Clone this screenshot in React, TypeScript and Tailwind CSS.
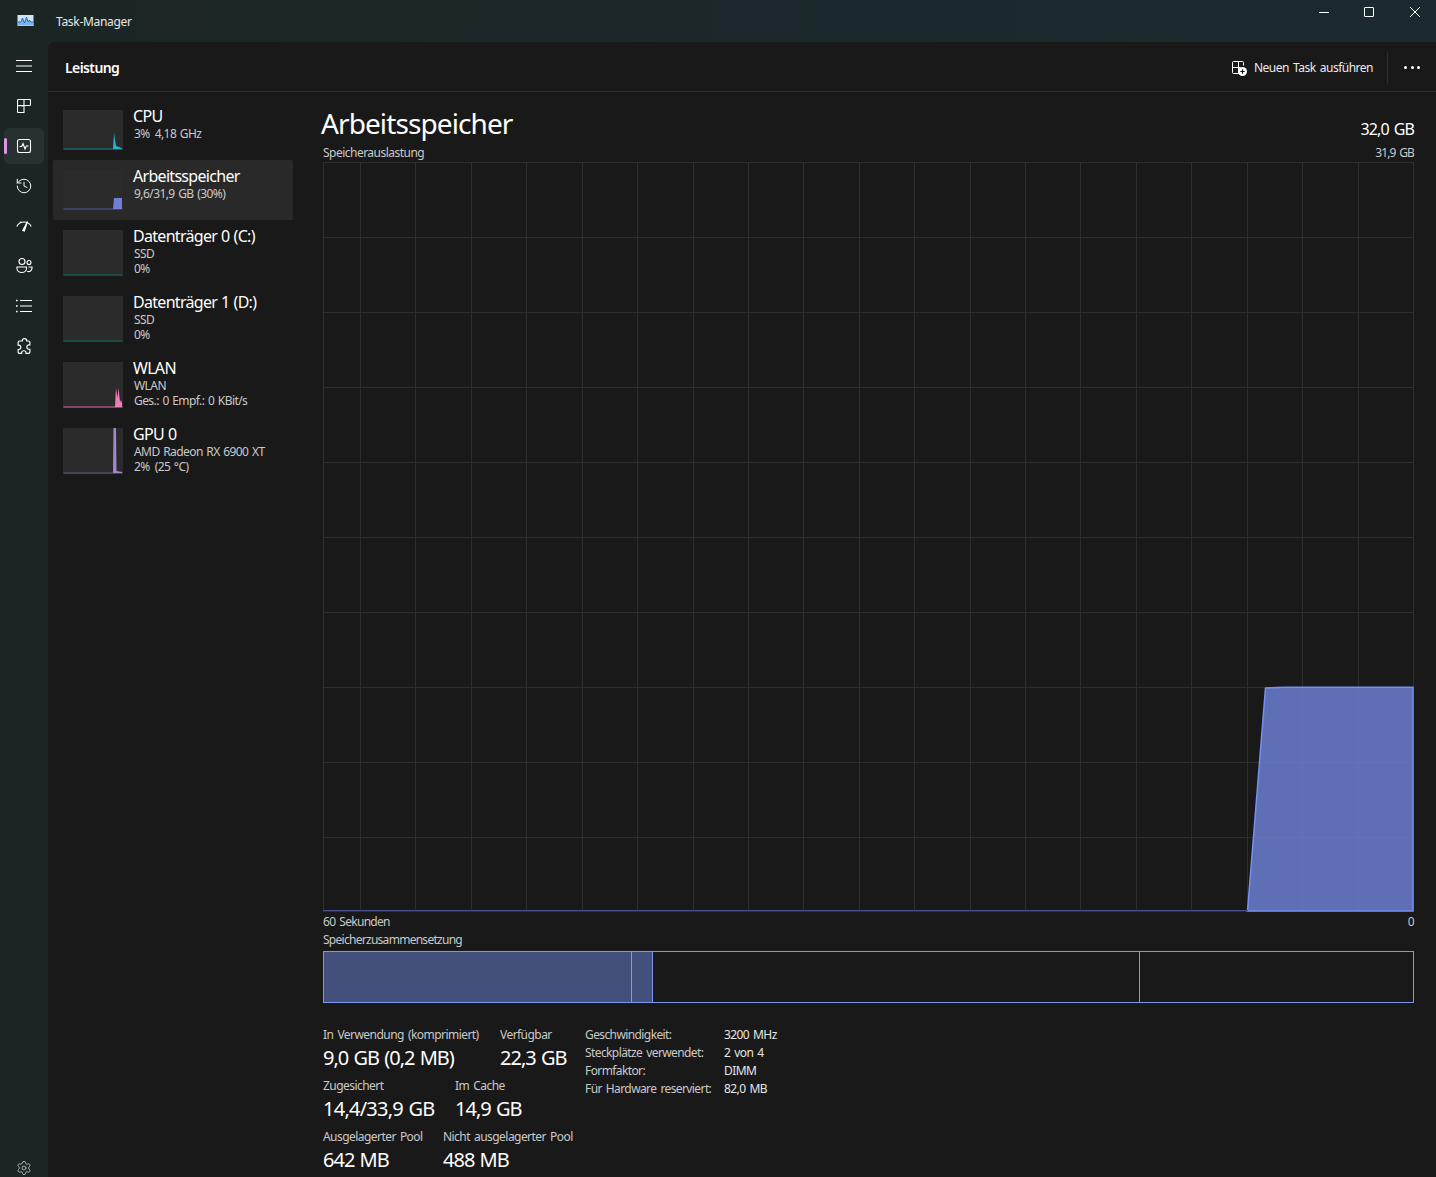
import { History, Settings } from "lucide-react";

const gridX = [360, 415, 471, 526, 582, 637, 693, 748, 803, 859, 914, 970, 1025, 1080, 1136, 1191, 1247, 1302, 1358];
const gridY = [237, 312, 387, 462, 537, 612, 687, 762, 837];

function AppIcon() {
  return (
    <svg width="18" height="14" viewBox="0 0 18 14">
      <rect x="0.5" y="1" width="16" height="11" fill="#cfe3f5" />
      <path d="M1 8h3l1.5-4 2 5 2-6 1.5 5 1.5-2 1 2h3v3.5H1z" fill="#7db4e8" />
      <path d="M1 8h3l1.5-4 2 5 2-6 1.5 5 1.5-2 1 2h3" fill="none" stroke="#1f6fc4" strokeWidth="1" />
    </svg>
  );
}

function MenuIcon() {
  return (
    <svg width="16" height="16" viewBox="0 0 16 16" stroke="currentColor" strokeWidth="1">
      <path d="M0 2.5h16M0 8h16M0 13.5h16" />
    </svg>
  );
}

function ProcessIcon() {
  return (
    <svg width="14" height="14" viewBox="1 1 14 14" fill="none" stroke="currentColor" strokeWidth="1.1" className="-mt-px">
      <path d="M1.500 7.500H8v7H2.500a1 1 0 0 1-1-1zM1.500 7.500v-5a1 1 0 0 1 1-1H8v6.500zM8 1.500h5.500a1 1 0 0 1 1 1v4a1 1 0 0 1-1 1H8z" />
    </svg>
  );
}

function PerfIcon() {
  return (
    <svg width="16" height="16" viewBox="0 0 16 16" fill="none" stroke="currentColor" strokeWidth="1.1">
      <rect x="1.5" y="1.5" width="13" height="13" rx="2" />
      <path d="M3.5 8.5h2.2l1.3-3 2 5.5 1.3-3h2.2" />
    </svg>
  );
}

function GaugeIcon() {
  return (
    <svg width="16" height="16" viewBox="0 0 16 16" fill="none" stroke="currentColor" strokeWidth="1.2" className="-mt-[3px]">
      <path d="M0.8 9.5A8 8 0 0 1 15.2 9.5" />
      <path d="M6.800 13.500L11.500 4.500L8.300 14z" fill="currentColor" />
      <path d="M4 4.600l1 1.400" />
    </svg>
  );
}

function UsersIcon() {
  return (
    <svg width="17" height="17" viewBox="0 0 17 17" fill="none" stroke="currentColor" strokeWidth="1.1" className="-mt-px">
      <circle cx="6" cy="4.5" r="3" />
      <circle cx="13" cy="5.5" r="2" />
      <path d="M1 10h9.500v1.500a4.750 4 0 0 1-9.500 0z" />
      <path d="M12.500 10H16v1a3.500 3.500 0 0 1-4.800 3.300" />
    </svg>
  );
}

function ListIcon() {
  return (
    <svg width="16" height="16" viewBox="0 0 16 16" fill="none" stroke="currentColor" strokeWidth="1.1" className="-mt-px">
      <path d="M4 2.500h12M4 8h12M4 13.500h12" />
      <path d="M0 2.500h1.600M0 8h1.600M0 13.500h1.600" strokeWidth="1.600" />
    </svg>
  );
}

function PuzzleIcon() {
  return (
    <svg width="15" height="17" viewBox="3 0.500 11.500 14" fill="none" stroke="currentColor" strokeWidth="0.95">
      <path d="M7 2.500c0-1 .8-1.500 1.700-1.500s1.800.6 1.800 1.500v.5H12a1.200 1.200 0 0 1 1.200 1.200v2h-.8c-1 0-1.700.7-1.700 1.800s.7 1.800 1.700 1.800h.8v2.200a1.200 1.200 0 0 1-1.200 1.200h-2v-.5c0-1-.8-1.700-1.800-1.700s-1.800.7-1.800 1.700v.5H4.700a1.200 1.200 0 0 1-1.200-1.200v-2H4c1 0 1.700-.8 1.700-1.800S5 6.400 4 6.400h-.5V4.200A1.200 1.200 0 0 1 4.700 3H7z" />
    </svg>
  );
}

function NewTaskIcon() {
  return (
    <svg width="16" height="16" viewBox="0 0 16 16" fill="none" stroke="#fff" strokeWidth="1">
      <path d="M1.500 7.500h6v6h-5a1 1 0 0 1-1-1zM1.500 7.500v-5a1 1 0 0 1 1-1h5v6zM7.500 1.500h4a1 1 0 0 1 1 1v3M7.500 7.500h2" />
      <circle cx="11.500" cy="11.500" r="4.500" fill="#fff" stroke="none" />
      <path d="M11.500 9.300v4.400M9.300 11.500h4.400" stroke="#191919" strokeWidth="1.200" />
    </svg>
  );
}

function NavButton({ children, active }: { children: React.ReactNode; active?: boolean }) {
  return (
    <div className={active ? "relative flex h-9 w-10 items-center justify-center rounded-[5px] bg-[#273130]" : "flex h-9 w-10 items-center justify-center"}>
      {active && <div className="absolute left-0 top-[10px] h-4 w-[3px] rounded-full bg-[#e095e4]" />}
      {children}
    </div>
  );
}

function Thumb({ h, line, fill, path }: { h: number; line: string; fill: string; path: string }) {
  return (
    <svg width="60" height={h} viewBox={`0 0 60 ${h}`} className="shrink-0">
      <rect width="60" height={h} fill="#2b2b2b" />
      <rect x="0.5" y={h - 1.5} width="59" height="1" fill={line} />
      <path d={path} fill={fill} />
    </svg>
  );
}

type Device = {
  name: string;
  lines: string[];
  thumbH: number;
  line: string;
  fill: string;
  path: string;
  selected?: boolean;
};

const devices: Device[] = [
  { name: "CPU", lines: ["3%\u2009 4,18 GHz"], thumbH: 40, line: "#147a8c", fill: "#26b4d0", path: "M50 39L51 23L53 36L56 37L59 38.5V39z" },
  { name: "Arbeitsspeicher", lines: ["9,6/31,9 GB (30%)"], thumbH: 40, line: "#4e5ca8", fill: "#6d7fd6", path: "M50 39L51 28H59V39z", selected: true },
  { name: "Datenträger 0 (C:)", lines: ["SSD", "0%"], thumbH: 46, line: "#0f6a62", fill: "none", path: "" },
  { name: "Datenträger 1 (D:)", lines: ["SSD", "0%"], thumbH: 46, line: "#0f6a62", fill: "none", path: "" },
  { name: "WLAN", lines: ["WLAN", "Ges.: 0 Empf.: 0 KBit/s"], thumbH: 46, line: "#d8689f", fill: "#f07fb8", path: "M52 45L53 26L54.5 36L55.5 26L57 40L58 38L59 41V45z" },
  { name: "GPU 0", lines: ["AMD Radeon RX 6900 XT", "2%\u2009 (25 °C)"], thumbH: 46, line: "#6e5a96", fill: "#a585d4", path: "M50 45L50.5 0H53L53.5 43L59 44V45z" },
];

function DeviceRow({ d }: { d: Device }) {
  return (
    <div className={d.selected ? "flex gap-[10px] rounded-[2px] bg-[#292929] p-[10px]" : "flex gap-[10px] p-[10px]"}>
      <Thumb h={d.thumbH} line={d.line} fill={d.fill} path={d.path} />
      <div className="flex min-w-0 flex-col">
        <div className="-mt-[2px] whitespace-nowrap text-[16px] leading-[16px] tracking-[-0.7px] [word-spacing:0.500px] text-white">{d.name}</div>
        <div className="mt-[2px] pl-px">
          {d.lines.map((l) => (
            <div key={l} className="whitespace-pre text-[12px] leading-[15px] tracking-[-0.57px] [word-spacing:1px] text-[#c9c9c9]">
              {l}
            </div>
          ))}
        </div>
      </div>
    </div>
  );
}

function Stat({ label, value, w, wide }: { label: string; value: string; w: string; wide?: boolean }) {
  return (
    <div className={w}>
      <div className="whitespace-nowrap text-[12px] leading-[16px] tracking-[-0.55px] [word-spacing:1.500px] text-[#c9c9c9]">{label}</div>
      <div className={wide ? "mt-px whitespace-nowrap text-[20px] leading-[27px] tracking-[-0.75px] [word-spacing:1px] text-white" : "mt-px whitespace-nowrap text-[20px] leading-[27px] tracking-[-1px] [word-spacing:1px] text-white"}>{value}</div>
    </div>
  );
}

const specs = [
  ["Geschwindigkeit:", "3200 MHz"],
  ["Steckplätze verwendet:", "2 von 4"],
  ["Formfaktor:", "DIMM"],
  ["Für Hardware reserviert:", "82,0 MB"],
];

export default function App() {
  return (
    <div className="flex h-[1177px] w-[1436px] flex-col overflow-hidden bg-gradient-to-r from-[#1b2524] to-[#1c2a30] font-['Noto_Sans',sans-serif] text-white">
      {/* title bar */}
      <div className="flex h-[42px] shrink-0 items-center">
        <div className="ml-[17px] mr-[21px] flex w-[18px] justify-center">
          <AppIcon />
        </div>
        <span className="mt-[2px] text-[12px] tracking-[-0.3px] text-[#e8e8e8]">Task-Manager</span>
        <div className="ml-auto flex items-center gap-[35px] pb-[18px] pr-[15px]">
          <div className="h-px w-[10px] bg-white" />
          <div className="h-[10px] w-[10px] rounded-[1px] border border-white" />
          <svg width="12" height="12" viewBox="0 0 12 12" stroke="#fff" strokeWidth="1">
            <path d="M1 1l10 10M11 1L1 11" />
          </svg>
        </div>
      </div>

      <div className="flex min-h-0 flex-1">
        {/* nav rail */}
        <div className="flex w-[48px] shrink-0 flex-col justify-between bg-[#1b2524] pl-1 pt-[6px] text-white">
          <div className="flex flex-col gap-1">
            <NavButton><MenuIcon /></NavButton>
            <NavButton><ProcessIcon /></NavButton>
            <NavButton active><PerfIcon /></NavButton>
            <NavButton><History size={18} strokeWidth={1.3} /></NavButton>
            <NavButton><GaugeIcon /></NavButton>
            <NavButton><UsersIcon /></NavButton>
            <NavButton><ListIcon /></NavButton>
            <NavButton><PuzzleIcon /></NavButton>
          </div>
          <div className="-mb-[9px]">
            <NavButton><Settings size={16} strokeWidth={1.1} className="text-[#d8d8d8]" /></NavButton>
          </div>
        </div>

        <div className="flex min-w-0 flex-1 flex-col rounded-tl-[7px] bg-[#191919]">
          {/* header */}
          <div className="flex h-[50px] shrink-0 items-center border-b border-[#2c2c2c] pl-[17px] pr-[16px] pt-[2px]">
            <span className="text-[14px] font-semibold tracking-[-0.6px]">Leistung</span>
            <div className="ml-auto flex items-center">
              <NewTaskIcon />
              <span className="ml-[7px] text-[12px] tracking-[-0.5px] [word-spacing:1.500px] text-[#ececec]">Neuen Task ausführen</span>
              <div className="ml-[14px] h-[32px] w-px bg-[#2e2e2e]" />
              <div className="ml-4 flex gap-[3.500px]">
                <div className="h-[3px] w-[3px] rounded-full bg-white" />
                <div className="h-[3px] w-[3px] rounded-full bg-white" />
                <div className="h-[3px] w-[3px] rounded-full bg-white" />
              </div>
            </div>
          </div>

          <div className="flex min-h-0 flex-1">
            {/* device list */}
            <div className="w-[245px] shrink-0 pl-[5px] pt-[8px]">
              {devices.map((d) => (
                <DeviceRow key={d.name} d={d} />
              ))}
            </div>

            {/* detail pane */}
            <div className="ml-[30px] w-[1091px] shrink-0">
              <div className="flex h-[49px] items-end justify-between pt-[14px]">
                <span className="-ml-[2px] mb-px text-[28px] leading-[34px] tracking-[-0.9px]">Arbeitsspeicher</span>
                <span className="pb-[1px] text-[16px] leading-[22px] tracking-[-0.85px] [word-spacing:1.500px]">32,0 GB</span>
              </div>
              <div className="mt-[4px] flex h-4 items-center justify-between text-[12px] tracking-[-0.52px] [word-spacing:1.500px] text-[#c9c9c9]">
                <span>Speicherauslastung</span>
                <span className="tracking-[-0.9px]">31,9 GB</span>
              </div>

              <svg width="1091" height="750" viewBox="323 162 1091 750" className="mt-px block">
                <rect x="323.500" y="162.500" width="1090" height="749" fill="#191919" stroke="#2e2e2e" />
                {gridX.map((x) => (
                  <line key={x} x1={x + 0.5} x2={x + 0.5} y1="162" y2="911" stroke="#2e2e2e" />
                ))}
                {gridY.map((y) => (
                  <line key={y} x1="323" x2="1414" y1={y + 0.5} y2={y + 0.5} stroke="#2e2e2e" />
                ))}
                <path d="M1247.500 911L1265.500 688L1285 687.200H1413V911z" fill="#6f84dc" fillOpacity="0.8" stroke="#7590f0" strokeWidth="1.500" />
                <line x1="323" x2="1248" y1="910.500" y2="910.500" stroke="#47528c" strokeWidth="1.200" />
              </svg>

              <div className="mt-px flex h-[18px] items-center justify-between text-[12px] tracking-[-0.7px] [word-spacing:1.500px] text-[#c9c9c9]">
                <span>60 Sekunden</span>
                <span>0</span>
              </div>
              <div className="flex h-[18px] items-center text-[12px] tracking-[-0.72px] text-[#c9c9c9]">
                Speicherzusammensetzung
              </div>
              <div className="mt-[2px] flex h-[52px] border border-[#7f95ee]">
                <div className="w-[308px] border-r border-[#7f95ee] bg-[#44507c]" />
                <div className="w-[21px] border-r border-[#7f95ee] bg-[#44507c]" />
                <div className="w-[487px] border-r border-[#7f95ee]" />
              </div>

              {/* stats */}
              <div className="mt-[24px] flex">
                <div className="w-[262px] shrink-0">
                  <div className="flex gap-5">
                    <Stat w="w-[157px]" label="In Verwendung (komprimiert)" value="9,0 GB (0,2 MB)" />
                    <Stat w="w-[80px]" label="Verfügbar" value="22,3 GB" />
                  </div>
                  <div className="mt-[7px] flex gap-5">
                    <Stat w="w-[112px]" label="Zugesichert" value="14,4/33,9 GB" wide />
                    <Stat w="w-[80px]" label="Im Cache" value="14,9 GB" />
                  </div>
                  <div className="mt-[7px] flex gap-5">
                    <Stat w="w-[100px]" label="Ausgelagerter Pool" value="642 MB" />
                    <Stat w="w-[130px]" label="Nicht ausgelagerter Pool" value="488 MB" />
                  </div>
                </div>
                <div className="-mt-px flex flex-col">
                  {specs.map(([k, v]) => (
                    <div key={k} className="flex h-[18px] items-center text-[12px] tracking-[-0.6px] [word-spacing:1.500px]">
                      <span className="w-[139px] whitespace-nowrap text-[#c9c9c9]">{k}</span>
                      <span className="text-[#e6e6e6]">{v}</span>
                    </div>
                  ))}
                </div>
              </div>
            </div>
          </div>
        </div>
      </div>
    </div>
  );
}
